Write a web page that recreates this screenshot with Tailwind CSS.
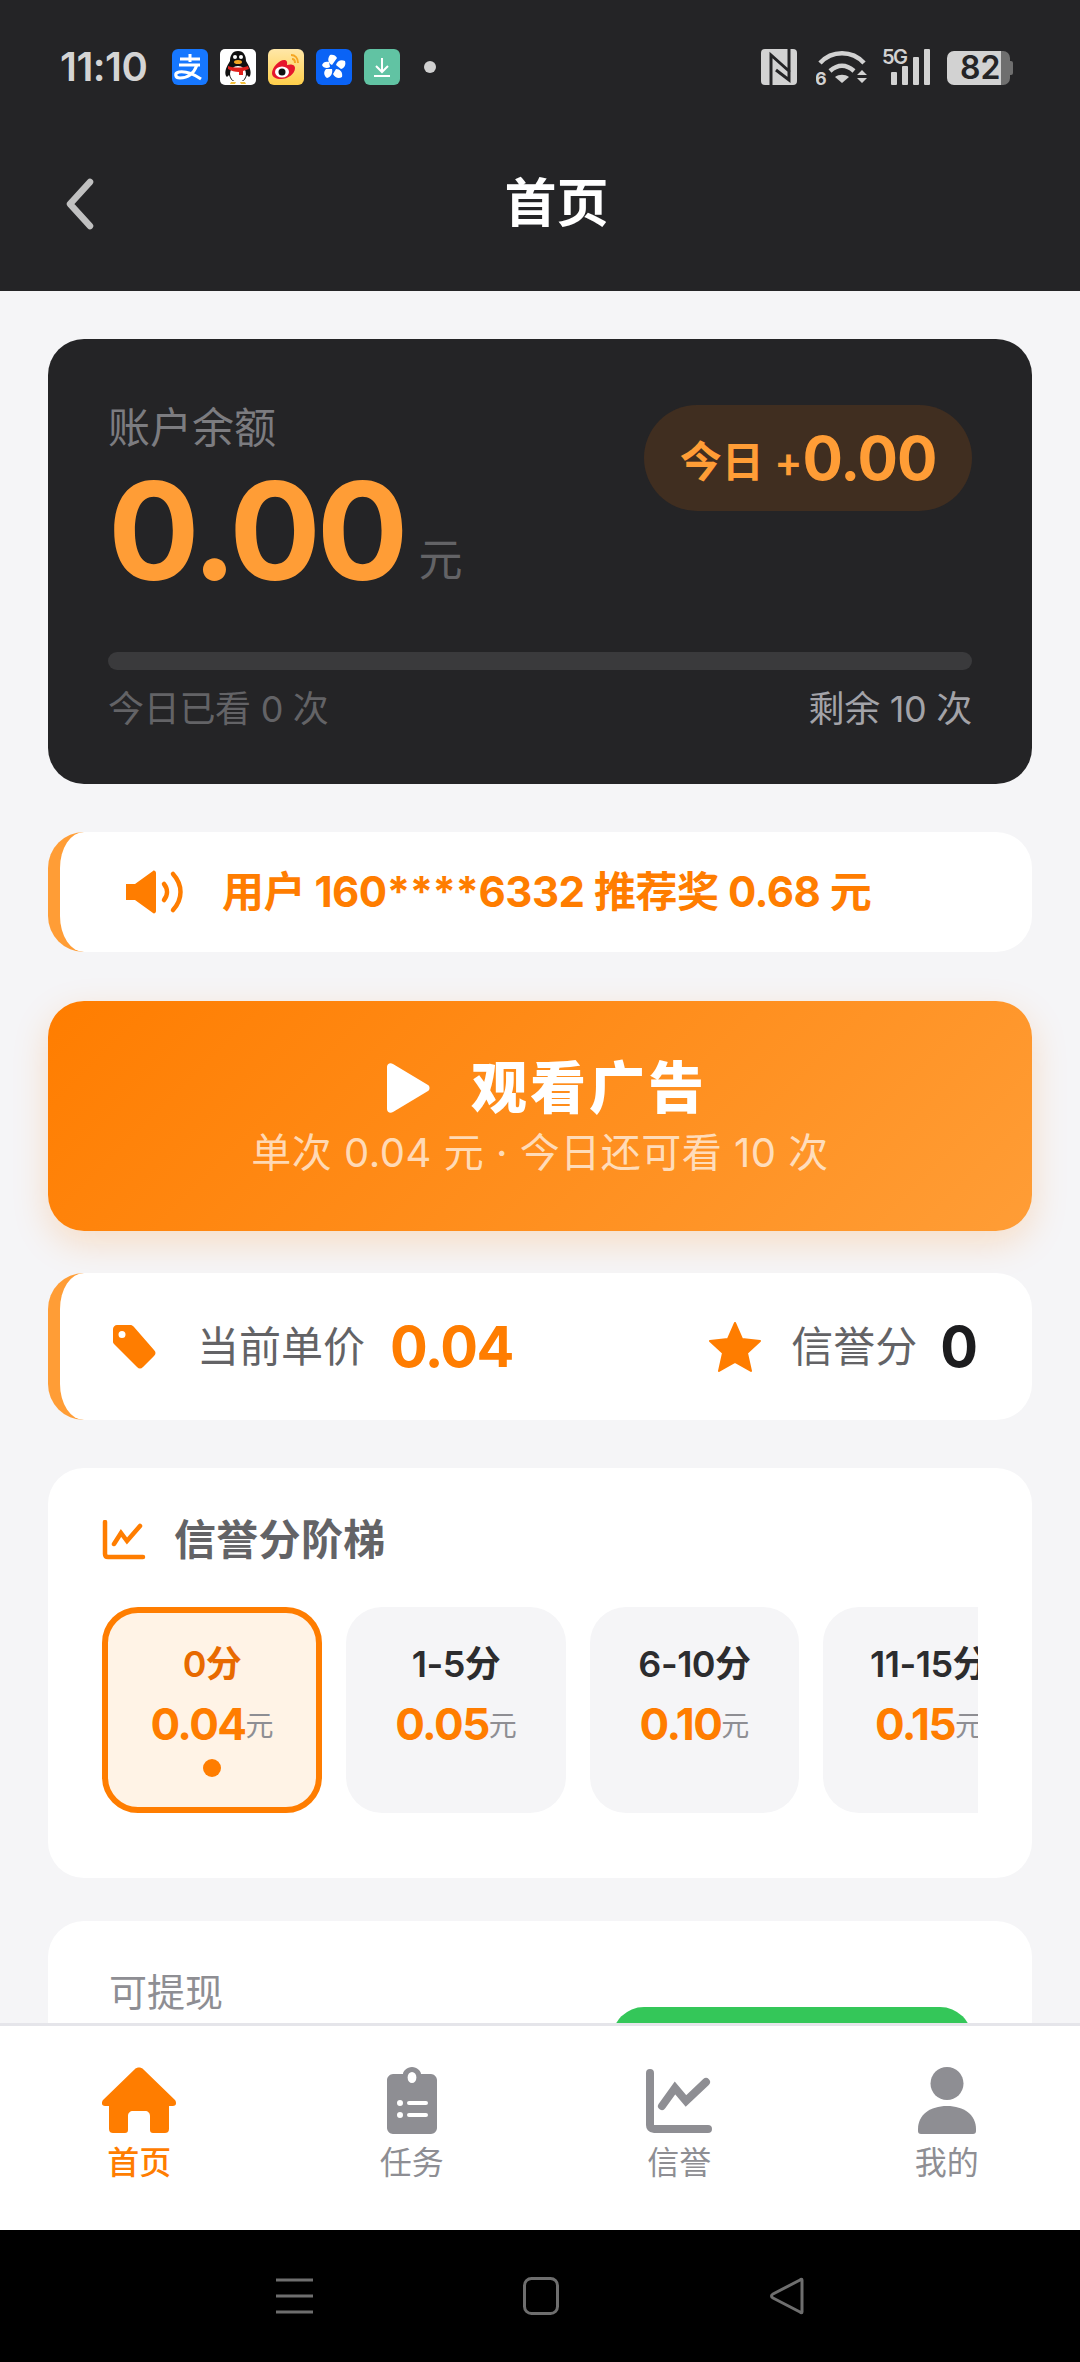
<!DOCTYPE html>
<html lang="zh">
<head>
<meta charset="utf-8">
<script src="https://cdn.jsdelivr.net/npm/@tailwindcss/browser@4"></script>
</head>
<body class="m-0">
<div class="w-[1080px] h-[2362px] flex flex-col overflow-hidden bg-[#f5f5f7] font-['Inter','Noto_Sans_CJK_SC',sans-serif]">
  <!-- header -->
  <header class="h-[291px] shrink-0 bg-[#242426] flex flex-col">
    <div class="h-[134px] pl-[60px] pr-[67px] pt-[49px] flex items-start">
      <span class="w-[86px] h-[36px] leading-[36px] text-[40px] font-semibold text-[#d4d4d4] tracking-[-0.5px]">11:10</span>
      <div class="ml-[26px] flex gap-[12px] items-center">
        <svg class="w-[36px] h-[36px]" viewBox="0 0 36 36"><rect width="36" height="36" rx="6" fill="#1677ff"/><path d="M18 5v8M8 10h20M7 16h21M25 16c-3 8-9 13-17 13-5 0-6-5-1-6 7-1 16 3 22 7" fill="none" stroke="#fff" stroke-width="3"/></svg>
        <svg class="w-[36px] h-[36px]" viewBox="0 0 36 36"><rect width="36" height="36" rx="5" fill="#fff"/><path d="M18 2c-6 0-8 5-8 10-3 5-6 10-4 15 1 2 3-1 3-1 1 3 2 5 4 6h10c2-1 3-3 4-6 0 0 2 3 3 1 2-5-1-10-4-15 0-5-2-10-8-10z" fill="#111"/><ellipse cx="18" cy="25" rx="8" ry="8" fill="#fff"/><circle cx="15" cy="8" r="2" fill="#fff"/><circle cx="21" cy="8" r="2" fill="#fff"/><ellipse cx="18" cy="13" rx="4" ry="2" fill="#f5a623"/><path d="M8 17c6 2 14 2 20 0l1 3-6 2v4h-4v-3c-4 0-8-1-11-3z" fill="#e0201c"/><path d="M11 33h5l-1 2h-5zM20 33h5l1 2h-5z" fill="#f5c13c"/></svg>
        <svg class="w-[36px] h-[36px]" viewBox="0 0 36 36"><defs><linearGradient id="wb" x1="0" y1="0" x2="0" y2="1"><stop offset="0" stop-color="#ffe7a8"/><stop offset="1" stop-color="#ffcf4a"/></linearGradient></defs><rect width="36" height="36" rx="6" fill="url(#wb)"/><path d="M4 24c0-6 8-14 13-13 3 1 2 4 2 5 3-1 8-1 8 3 0 6-7 11-14 11-5 0-9-2-9-6z" fill="#e6162d"/><ellipse cx="14" cy="23" rx="7" ry="5.5" fill="#fff"/><circle cx="14" cy="23" r="3.5" fill="#111"/><path d="M23 6c4 0 7 3 7 8M24 10c2 0 3 2 3 4" fill="none" stroke="#f5a623" stroke-width="2"/></svg>
        <svg class="w-[36px] h-[36px]" viewBox="0 0 36 36"><rect width="36" height="36" rx="6" fill="#0a63f6"/><g fill="#fff"><path d="M16 16c-4-2-5-6-2-10 2-1 6 0 7 3z"/><path d="M20 16c1-4 5-6 9-4 1 3 0 7-4 8z"/><path d="M20 20c4 0 7 3 6 8-3 2-7 1-9-3z"/><path d="M16 20c1 4-1 8-5 9-3-2-4-6-1-9z"/><path d="M14 18c-3 2-7 1-8-2 1-3 4-4 7-3z"/></g></svg>
        <svg class="w-[36px] h-[36px]" viewBox="0 0 36 36"><rect width="36" height="36" rx="6" fill="#61c3a3"/><path d="M18 9v13M12 17l6 6 6-6M10 27h16" fill="none" stroke="#fff" stroke-width="2"/></svg>
        <span class="ml-[12px] w-[12px] h-[12px] rounded-full bg-[#d0d0d0]"></span>
      </div>
      <div class="ml-auto flex items-start">
        <svg class="w-[36px] h-[36px]" viewBox="0 0 36 36"><rect width="36" height="36" rx="4" fill="#d2d2d2"/><path d="M10 36V6l19 17M28 0v31L15 21" fill="none" stroke="#242426" stroke-width="3"/></svg>
        <svg class="ml-[19px] w-[52px] h-[38px] -mt-[1px]" viewBox="0 0 52 38"><g fill="none" stroke="#d2d2d2" stroke-width="4.500"><path d="M4 15C16 2 36 2 48 15"/><path d="M14 23c8-7 16-7 24 0"/></g><path d="M19 29c4-3 10-3 14 0l-7 6z" fill="#d2d2d2"/><text x="-1" y="37" font-size="18" font-weight="700" fill="#d2d2d2">6</text><path d="M41 27l5-5 5 5zM41 30h10l-5 5z" fill="#d2d2d2"/></svg>
        <div class="ml-[14px] relative w-[48px] h-[36px]">
          <svg class="absolute inset-0 w-[48px] h-[36px]" viewBox="0 0 48 36"><rect x="9" y="23" width="6" height="13" rx="1" fill="#d2d2d2"/><rect x="20" y="17" width="6" height="19" rx="1" fill="#d2d2d2"/><rect x="31" y="8" width="6" height="28" rx="1" fill="#d2d2d2"/><rect x="42" y="0" width="6" height="36" rx="1" fill="#d2d2d2"/></svg>
          <span class="absolute left-0 -top-[3px] text-[20px] leading-[22px] font-semibold text-[#d2d2d2] tracking-[-1.5px]">5G</span>
        </div>
        <div class="ml-[17px] mt-[2px] relative w-[66px] h-[34px] flex items-center">
          <div class="w-[63px] h-[34px] rounded-[7px] bg-[linear-gradient(90deg,#d2d2d2_85%,#6f6f6f_85%)] text-[#242426] text-[32px] font-semibold leading-[34px] pl-[13px]">82</div>
          <span class="w-[3px] h-[14px] rounded-r-[2px] bg-[#6f6f6f]"></span>
        </div>
      </div>
    </div>
    <div class="relative h-[140px] flex items-center justify-center pl-[33px]">
      <svg class="absolute left-[63px] top-[43px] w-[32px] h-[54px]" viewBox="0 0 32 54"><path d="M27 5L7 27l20 22" fill="none" stroke="#c0c0c0" stroke-width="6.5" stroke-linecap="round" stroke-linejoin="round"/></svg>
      <span class="text-[52px] leading-[60px] font-bold text-white">首页</span>
    </div>
  </header>

  <!-- content -->
  <main class="flex-1 min-h-0 overflow-hidden px-[48px] pt-[48px] flex flex-col">
    <!-- balance -->
    <section class="shrink-0 h-[445px] rounded-[36px] bg-[#242426] px-[60px] pt-[60px] flex flex-col">
      <div class="flex justify-between items-start h-[193px]">
        <div>
          <div class="text-[42px] leading-[56px] text-[#7c7c80] mt-[1px]">账户余额</div>
          <div class="flex items-end mt-[7px]">
            <span class="text-[136px] leading-[136px] font-bold text-[#ff9d36] tracking-[-4px]">0.00</span>
            <span class="ml-[14px] mb-[13px] text-[44px] leading-[52px] text-[#636366]">元</span>
          </div>
        </div>
        <div class="mt-[6px] w-[328px] h-[106px] rounded-full bg-[#402e20] flex items-center justify-center text-[#ff9d36] font-semibold">
          <span class="text-[42px] mt-[6px]">今日 +</span><span class="text-[60px] font-bold leading-[60px] tracking-[-1px]">0.00</span>
        </div>
      </div>
      <div class="mt-[60px] h-[18px] rounded-full bg-[#3a3a3c]"></div>
      <div class="mt-[16px] flex justify-between text-[36px] leading-[46px] tracking-[-0.3px]">
        <span class="text-[#636366]">今日已看 0 次</span>
        <span class="text-[#a3a3a8]">剩余 10 次</span>
      </div>
    </section>

    <!-- ticker -->
    <section class="shrink-0 mt-[48px] h-[120px] rounded-[36px] bg-white border-l-[12px] border-[#ff9d36] pl-[66px] flex items-center">
      <svg class="w-[62px] h-[44px]" viewBox="0 0 62 44"><path d="M0 14h9L27 1c1-1 3 0 3 2v38c0 2-2 3-3 2L9 30H0z" fill="#ff7d00"/><g fill="none" stroke="#ff7d00" stroke-width="4.500" stroke-linecap="round"><path d="M38 14c4 5 4 11 0 16"/><path d="M47 4c10 11 10 25 0 36"/></g></svg>
      <span class="ml-[34px] text-[42px] leading-[50px] font-bold text-[#ff7d00] tracking-[-0.5px]">用户 160****6332 推荐奖 0.68 元</span>
    </section>

    <!-- cta -->
    <section class="shrink-0 mt-[49px] h-[230px] rounded-[36px] bg-[linear-gradient(135deg,#ff7d00,#ff9d36)] shadow-[0_12px_36px_rgba(255,125,0,0.2)] flex flex-col items-center pt-[57px]">
      <div class="flex items-center h-[60px] pl-[12px]">
        <svg class="w-[46px] h-[52px]" viewBox="0 0 46 52"><path d="M2 5c0-3 3-5 6-3l35 21c2 1 2 5 0 6L8 50c-3 2-6 0-6-3z" fill="#fff"/></svg>
        <span class="ml-[40px] text-[56px] leading-[60px] font-black text-white tracking-[3px]">观看广告</span>
      </div>
      <div class="mt-[10px] text-[40px] leading-[50px] text-white/70 tracking-[0.5px]">单次 0.04 元 · 今日还可看 10 次</div>
    </section>

    <!-- price -->
    <section class="shrink-0 mt-[42px] h-[147px] rounded-[36px] bg-white border-l-[12px] border-[#ff9d36] pl-[53px] pr-[54px] flex items-center">
      <svg class="w-[44px] h-[44px]" viewBox="0 0 44 44"><path d="M4 0h14c1 0 2 1 3 2l20 23c2 2 2 4 0 6L30 42c-2 2-4 2-6 0L2 20c-1-1-2-2-2-3V4c0-2 2-4 4-4zM9 6a3.5 3.5 0 100 7 3.500 3.500 0 000-7z" fill="#ff7d00" fill-rule="evenodd"/></svg>
      <span class="ml-[40px] text-[42px] leading-[50px] text-[#636366]">当前单价</span>
      <span class="ml-[25px] text-[56px] leading-[64px] font-bold text-[#ff7d00] tracking-[-1.5px]">0.04</span>
      <svg class="ml-auto w-[52px] h-[50px]" viewBox="0 0 52 50"><path d="M26 1l7 16 18 2-13 12 4 18-16-9-16 9 4-18L1 19l18-2z" fill="#ff7d00" stroke="#ff7d00" stroke-width="2" stroke-linejoin="round"/></svg>
      <span class="ml-[30px] text-[42px] leading-[50px] text-[#636366]">信誉分</span>
      <span class="ml-[23px] text-[56px] leading-[64px] font-bold text-[#1c1c1e]">0</span>
    </section>

    <!-- tiers -->
    <section class="shrink-0 mt-[48px] h-[410px] rounded-[36px] bg-white px-[54px] pt-[50px]">
      <div class="flex items-center h-[44px]">
        <svg class="w-[44px] h-[40px]" viewBox="0 0 44 40"><path d="M3 2v32c0 2 1 3 3 3h35" fill="none" stroke="#ff7d00" stroke-width="4.500" stroke-linecap="round"/><path d="M12 24l7-11 6 8 13-15" fill="none" stroke="#ff7d00" stroke-width="4.500" stroke-linecap="round"/></svg>
        <span class="ml-[28px] text-[42px] leading-[50px] font-semibold text-[#636366] tracking-[0.3px]">信誉分阶梯</span>
      </div>
      <div class="mt-[45px] h-[206px] flex gap-[24px] overflow-hidden">
        <div class="shrink-0 w-[220px] h-[206px] rounded-[36px] border-[6px] border-[#ff7d00] bg-[#fff3e6] pt-[29px] flex flex-col items-center">
          <span class="text-[36px] leading-[44px] font-semibold text-[#e86a00] tracking-[-0.5px]">0分</span>
          <div class="mt-[14px] flex items-end leading-[48px]"><span class="text-[44px] font-bold text-[#ff7d00] tracking-[-1.5px]">0.04</span><span class="text-[28px] leading-[44px] text-[#8e8e93]">元</span></div>
          <span class="mt-[11px] w-[18px] h-[18px] rounded-full bg-[#ff7d00]"></span>
        </div>
        <div class="shrink-0 w-[220px] h-[206px] rounded-[36px] bg-[#f5f5f7] pt-[35px] flex flex-col items-center">
          <span class="text-[36px] leading-[44px] font-semibold text-[#2c2c2e] tracking-[-0.5px]">1-5分</span>
          <div class="mt-[14px] flex items-end leading-[48px]"><span class="text-[44px] font-bold text-[#ff7d00] tracking-[-1.5px]">0.05</span><span class="text-[28px] leading-[44px] text-[#8e8e93]">元</span></div>
        </div>
        <div class="shrink-0 w-[209px] h-[206px] rounded-[36px] bg-[#f5f5f7] pt-[35px] flex flex-col items-center">
          <span class="text-[36px] leading-[44px] font-semibold text-[#2c2c2e] tracking-[-0.5px]">6-10分</span>
          <div class="mt-[14px] flex items-end leading-[48px]"><span class="text-[44px] font-bold text-[#ff7d00] tracking-[-1.5px]">0.10</span><span class="text-[28px] leading-[44px] text-[#8e8e93]">元</span></div>
        </div>
        <div class="shrink-0 w-[212px] h-[206px] rounded-[36px] bg-[#f5f5f7] pt-[35px] flex flex-col items-center">
          <span class="text-[36px] leading-[44px] font-semibold text-[#2c2c2e] tracking-[-0.5px]">11-15分</span>
          <div class="mt-[14px] flex items-end leading-[48px]"><span class="text-[44px] font-bold text-[#ff7d00] tracking-[-1.5px]">0.15</span><span class="text-[28px] leading-[44px] text-[#8e8e93]">元</span></div>
        </div>
      </div>
    </section>

    <!-- withdraw -->
    <section class="shrink-0 mt-[43px] h-[300px] rounded-[36px] bg-white pl-[61px] pr-[60px] pt-[46px] flex justify-between items-start">
      <span class="text-[38px] leading-[50px] text-[#8e8e93]">可提现</span>
      <span class="mt-[40px] w-[360px] h-[100px] rounded-[32px] bg-[#34c759]"></span>
    </section>
  </main>

  <!-- tab bar -->
  <nav class="shrink-0 h-[207px] bg-white border-t-[3px] border-[#e5e5ea] flex justify-around pt-[41px]">
    <div class="flex flex-col items-center">
      <svg class="w-[76px] h-[67px]" viewBox="0 0 76 67"><path d="M34 2c2-2 6-2 8 0l32 31c2 3 1 6-2 6h-4v23c0 3-2 4-4 4H52c-2 0-3-1-3-3V49c0-3-2-5-5-5H32c-3 0-5 2-5 5v14c0 2-1 3-3 3H12c-2 0-4-1-4-4V39H4c-3 0-4-3-2-6z" fill="#ff7d00"/></svg>
      <span class="mt-[12px] text-[32px] leading-[34px] font-medium text-[#ff7d00]">首页</span>
    </div>
    <div class="flex flex-col items-center">
      <svg class="w-[50px] h-[67px]" viewBox="0 0 50 67"><path d="M16 7c0-3 4-7 9-7s9 4 9 7h10c3 0 6 3 6 6v48c0 3-3 6-6 6H6c-3 0-6-3-6-6V13c0-3 3-6 6-6zM25 5a4 5 0 100 11 4 5 0 000-11zM13 33a3 3 0 100 6 3 3 0 000-6zM22 34a2 2 0 000 4h17a2 2 0 000-4zM13 45a3 3 0 100 6 3 3 0 000-6zM22 46a2 2 0 000 4h17a2 2 0 000-4z" fill="#8e8e93" fill-rule="evenodd"/></svg>
      <span class="mt-[12px] text-[32px] leading-[34px] text-[#8e8e93]">任务</span>
    </div>
    <div class="flex flex-col items-center">
      <svg class="w-[66px] h-[67px]" viewBox="0 0 66 67"><path d="M4 6v52c0 2 1 4 4 4h54" fill="none" stroke="#8e8e93" stroke-width="8" stroke-linecap="round"/><path d="M16 39l13-18 11 13 20-19" fill="none" stroke="#8e8e93" stroke-width="8" stroke-linecap="round" stroke-linejoin="miter"/></svg>
      <span class="mt-[12px] text-[32px] leading-[34px] text-[#8e8e93]">信誉</span>
    </div>
    <div class="flex flex-col items-center">
      <svg class="w-[58px] h-[67px]" viewBox="0 0 58 67"><ellipse cx="29" cy="16.500" rx="16.500" ry="16.500" fill="#8e8e93"/><path d="M0 62c0-14 12-23 29-23s29 9 29 23v2c0 2-1 3-3 3H3c-2 0-3-1-3-3z" fill="#8e8e93"/></svg>
      <span class="mt-[12px] text-[32px] leading-[34px] text-[#8e8e93]">我的</span>
    </div>
  </nav>

  <!-- android nav -->
  <div class="shrink-0 h-[132px] bg-black flex items-start justify-center pt-[47px] gap-[210px]">
    <svg class="w-[37px] h-[38px]" viewBox="0 0 37 38"><path d="M0 3h37M0 19h37M0 35h37" stroke="#6e6e6e" stroke-width="3"/></svg>
    <svg class="w-[36px] h-[38px]" viewBox="0 0 36 38"><rect x="1.500" y="1.500" width="33" height="35" rx="7" fill="none" stroke="#6e6e6e" stroke-width="3"/></svg>
    <svg class="w-[36px] h-[38px]" viewBox="0 0 36 38"><path d="M33 3c0-1-1-1-2 0L4 17c-2 1-2 3 0 4l27 14c1 1 2 1 2 0z" fill="none" stroke="#6e6e6e" stroke-width="3" stroke-linejoin="round"/></svg>
  </div>
</div>
</body>
</html>
